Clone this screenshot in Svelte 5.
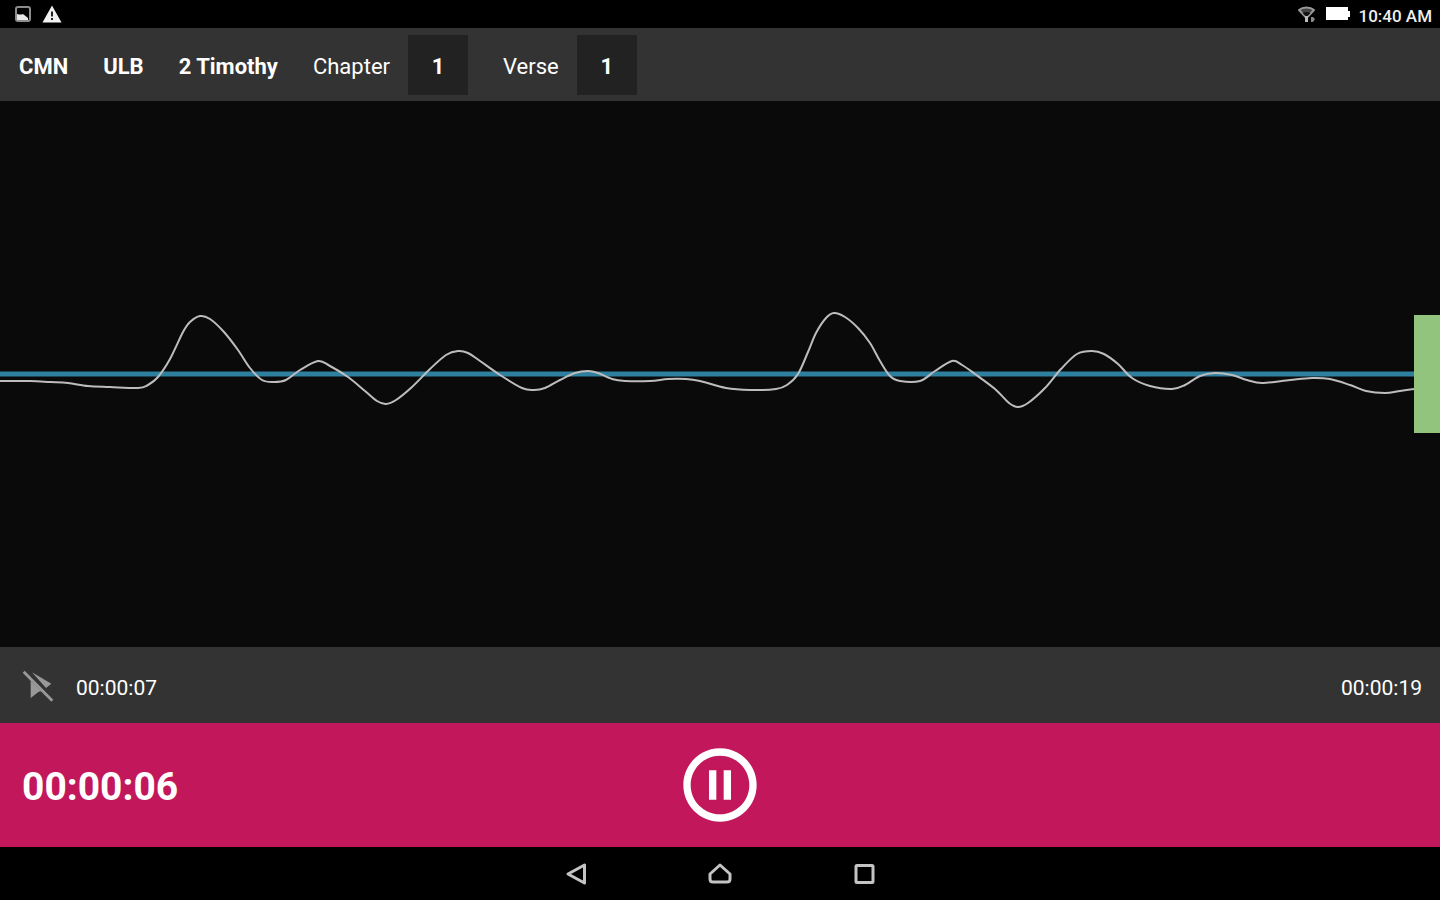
<script lang="ts">
    type Point = [number, number];

    const book = ["CMN", "ULB", "2 Timothy"];
    const chapter = 1;
    const verse = 1;

    // amplitude samples around a centre line at y = 273
    const samples: Point[] = [
        [0, 280], [30, 280], [50, 281], [68, 282], [88, 285], [110, 286], [138, 287], [148, 284],
        [158, 276], [170, 258], [183, 231], [190, 221], [200, 215], [210, 218], [224, 231], [238, 249],
        [250, 267], [262, 279], [274, 281], [286, 279], [300, 269], [318, 260], [330, 265], [348, 276],
        [365, 290], [377, 300], [386, 303], [396, 299], [412, 286], [430, 268], [446, 254], [458, 250],
        [468, 252], [480, 260], [500, 274], [522, 287], [534, 289], [545, 287], [560, 279], [575, 272],
        [588, 270], [598, 272], [612, 278], [625, 280], [650, 280], [668, 278], [686, 278], [700, 280],
        [726, 287], [750, 289], [776, 288], [787, 284], [798, 273], [808, 251], [816, 232], [826, 217],
        [834, 212], [845, 216], [858, 227], [870, 242], [880, 260], [890, 275], [900, 280], [920, 280],
        [935, 270], [952, 260], [962, 264], [975, 273], [995, 288], [1009, 302], [1018, 306], [1028, 302],
        [1045, 287], [1061, 268], [1077, 253], [1092, 250], [1104, 253], [1118, 263], [1132, 277],
        [1150, 285], [1172, 288], [1185, 284], [1200, 275], [1215, 272], [1232, 274], [1247, 279],
        [1262, 282], [1290, 279], [1312, 277], [1330, 278], [1350, 284], [1366, 290], [1385, 292],
        [1400, 290], [1414, 288],
    ];

    function smooth(points: Point[]) {
        let d = `M${points[0][0]} ${points[0][1]}`;
        for (let i = 0; i < points.length - 1; i++) {
            const p0 = points[i - 1] ?? points[i];
            const p1 = points[i];
            const p2 = points[i + 1];
            const p3 = points[i + 2] ?? p2;
            d += `C${p1[0] + (p2[0] - p0[0]) / 6} ${p1[1] + (p2[1] - p0[1]) / 6}`;
            d += ` ${p2[0] - (p3[0] - p1[0]) / 6} ${p2[1] - (p3[1] - p1[1]) / 6}`;
            d += ` ${p2[0]} ${p2[1]}`;
        }
        return d;
    }

    const wavePath = smooth(samples);
</script>

<div class="screen">
    <div class="status-bar">
        <div class="status-group">
            <svg width="18" height="18" viewBox="0 0 18 18" aria-hidden="true">
                <rect x="2" y="2" width="14" height="14" rx="2" fill="none" stroke="#8c8c8c" stroke-width="2" />
                <path d="M3 9q4 1 6 0l5 4v2H3z" fill="#e8e8e8" />
            </svg>
            <svg width="20" height="18" viewBox="0 0 20 18" aria-hidden="true">
                <path d="M10 0.500L19.500 17.500H0.500z" fill="#f2f2f2" />
                <path d="M9 6.500h2v5H9zM9 13h2v2H9z" fill="#222" />
            </svg>
        </div>
        <div class="status-group system">
            <svg width="20" height="18" viewBox="0 0 20 18" aria-hidden="true">
                <path d="M2 5C6 1.500 13 1.500 17 5L9.500 13z" fill="#444" stroke="#999" stroke-width="2" stroke-linejoin="round" />
                <path d="M5.500 8q4-2 8 0L9.500 12z" fill="#111" />
                <path d="M8 11h3v6H8z" fill="#bbb" />
                <path d="M14 12h2l2 2-2 3h-2z" fill="#888" />
            </svg>
            <svg width="26" height="18" viewBox="0 0 26 18" aria-hidden="true">
                <path d="M1 2h22v4h2v6h-2v3H1z" fill="#fff" />
            </svg>
            <span class="clock">10:40 AM</span>
        </div>
    </div>

    <header class="toolbar">
        {#each book as part}
            <strong>{part}</strong>
        {/each}
        <div class="unit">
            <span id="chapter-label">Chapter</span>
            <button type="button" aria-labelledby="chapter-label">{chapter}</button>
        </div>
        <div class="unit">
            <span id="verse-label">Verse</span>
            <button type="button" aria-labelledby="verse-label">{verse}</button>
        </div>
    </header>

    <main class="recording">
        <svg class="wave" viewBox="0 0 1414 546" preserveAspectRatio="none" aria-hidden="true">
            <line x1="0" y1="273" x2="1414" y2="273" />
            <path d={wavePath} />
        </svg>
        <div class="level"></div>
    </main>

    <div class="timeline">
        <button type="button" class="marker" aria-label="Markers off">
            <svg width="32" height="32" viewBox="0 0 96 96" aria-hidden="true">
                <path d="M30 7L88 41 72 54z" />
                <path d="M26 32L58 64 50 65 26 84z" />
                <path d="M8 2L94 89 88 95 2 8z" />
            </svg>
        </button>
        <span>00:00:07</span>
        <span class="total">00:00:19</span>
    </div>

    <div class="controls">
        <span class="elapsed">00:00:06</span>
        <button type="button" aria-label="Pause">
            <svg width="88" height="88" viewBox="0 0 24 24" aria-hidden="true">
                <path d="M9 16h2V8H9v8zm3-14C6.480 2 2 6.480 2 12s4.480 10 10 10 10-4.480 10-10S17.520 2 12 2zm0 18c-4.410 0-8-3.590-8-8s3.590-8 8-8 8 3.590 8 8-3.590 8-8 8zm1-4h2V8h-2v8z" fill="#fff" />
            </svg>
        </button>
    </div>

    <nav class="nav-bar">
        <button type="button" aria-label="Back">
            <svg width="24" height="24" viewBox="0 0 24 24" aria-hidden="true">
                <path d="M20.500 3v18L4 12z" />
            </svg>
        </button>
        <button type="button" aria-label="Home">
            <svg width="24" height="24" viewBox="0 0 24 24" aria-hidden="true">
                <path d="M12 3L22 12v5q0 3-3 3H5q-3 0-3-3V12z" />
            </svg>
        </button>
        <button type="button" aria-label="Recent apps">
            <svg width="24" height="24" viewBox="0 0 24 24" aria-hidden="true">
                <rect x="4" y="3.500" width="17" height="17" rx="1" />
            </svg>
        </button>
    </nav>
</div>

<style>
    :global(body) {
        background: #000;
    }

    .screen {
        display: flex;
        flex-direction: column;
        min-height: 100vh;
        background: #000;
        color: #fff;
        font-family: Roboto, sans-serif;
        font-size: 22px;
        line-height: 28px;
    }

    button {
        display: grid;
        place-items: center;
        padding: 0;
        border: 0;
        background: none;
        color: inherit;
        font: inherit;
        cursor: pointer;
    }

    svg {
        display: block;
    }

    .status-bar {
        display: flex;
        justify-content: space-between;
        align-items: center;
        height: 28px;
        padding: 0 8px 0 14px;
    }

    .status-group {
        display: flex;
        align-items: center;
        gap: 10px;
    }

    .system {
        gap: 8px;
    }

    .clock {
        padding-top: 4px;
        color: #eee;
        font-size: 17px;
        font-weight: 500;
        line-height: 24px;
    }

    .toolbar {
        display: flex;
        align-items: center;
        gap: 35px;
        height: 73px;
        padding: 0 19px;
        background: #333;
    }

    .toolbar strong,
    .toolbar span,
    .timeline span {
        padding-top: 4px;
    }

    .toolbar strong {
        font-weight: 700;
    }

    .unit {
        display: flex;
        align-items: center;
        gap: 18px;
    }

    .unit button {
        width: 60px;
        height: 60px;
        padding-top: 4px;
        background: #222;
        font-weight: 700;
    }

    .recording {
        display: flex;
        flex: 1;
        align-items: center;
        background: #0a0a0a;
    }

    .wave {
        flex: 1;
        align-self: stretch;
        min-width: 0;
        height: 100%;
        min-height: 240px;
    }

    .wave line {
        stroke: #2f7f9f;
        stroke-width: 5px;
        vector-effect: non-scaling-stroke;
    }

    .wave path {
        fill: none;
        stroke: #bdbdbd;
        stroke-width: 2px;
        vector-effect: non-scaling-stroke;
    }

    .level {
        width: 26px;
        height: 118px;
        background: #93c47d;
    }

    .timeline {
        display: flex;
        align-items: center;
        gap: 22px;
        height: 76px;
        padding: 2px 18px 0 22px;
        box-sizing: border-box;
        background: #333;
        font-size: 21px;
    }

    .marker svg {
        fill: #999;
    }

    .total {
        margin-left: auto;
    }

    .controls {
        display: grid;
        grid-template-columns: 1fr auto 1fr;
        align-items: center;
        height: 124px;
        padding: 0 22px;
        background: #c2185b;
    }

    .elapsed {
        padding-top: 4px;
        font-size: 39px;
        font-weight: 700;
        line-height: 48px;
    }

    .nav-bar {
        display: flex;
        justify-content: center;
        align-items: center;
        gap: 96px;
        height: 53px;
    }

    .nav-bar button {
        width: 48px;
        height: 48px;
    }

    .nav-bar svg {
        fill: none;
        stroke: #c4c4c4;
        stroke-width: 3px;
        stroke-linejoin: round;
    }
</style>
